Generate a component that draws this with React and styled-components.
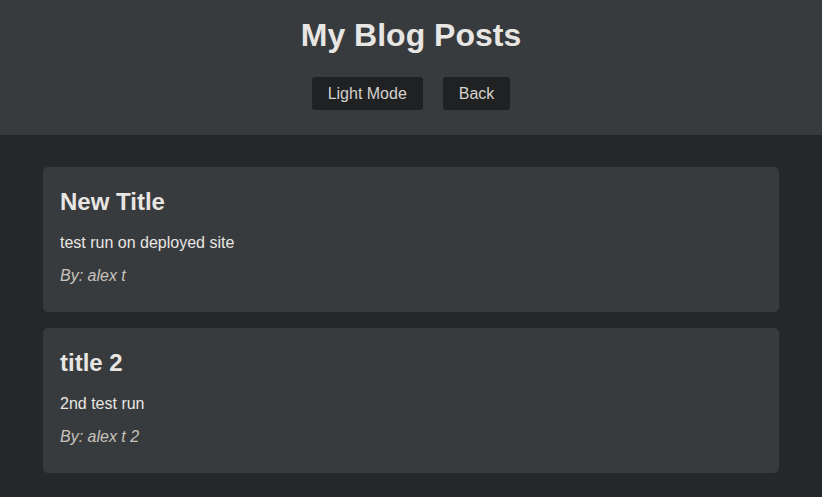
import React from 'react';
import styled, { createGlobalStyle } from 'styled-components';

const GlobalStyle = createGlobalStyle`
    html, body {
        margin: 0;
        padding: 0;
        background-color: #25282a;
        font-family: "Liberation Sans", Arial, sans-serif;
        color: #e8e6e3;
    }
`;

const Header = styled.header`
    background-color: #383b3e;
    padding: 17px 0 25px;
    display: flex;
    flex-direction: column;
    align-items: center;
`;

const Title = styled.h1`
    margin: 0;
    font-size: 32px;
    line-height: 37px;
    font-weight: bold;
    color: #e8e6e3;
`;

const ButtonRow = styled.div`
    display: flex;
    gap: 20px;
    margin-top: 23px;
`;

const Button = styled.button`
    background-color: #1f2123;
    color: #d6d2cc;
    border: none;
    border-radius: 3px;
    padding: 8px 16px;
    font-family: inherit;
    font-size: 16px;
    line-height: 17px;
    cursor: pointer;
`;

const Main = styled.main`
    padding: 32px 43px;
    display: flex;
    flex-direction: column;
    gap: 16px;
`;

const Card = styled.article`
    background-color: #383b3e;
    border-radius: 5px;
    padding: 21px 17px 27px;
`;

const PostTitle = styled.h2`
    margin: 0 0 18px;
    font-size: 24px;
    line-height: 28px;
    font-weight: bold;
    color: #e8e6e3;
`;

const Body = styled.p`
    margin: 0 0 15px;
    font-size: 16px;
    line-height: 18px;
    color: #e8e6e3;
`;

const Author = styled.p`
    margin: 0;
    font-size: 16px;
    line-height: 18px;
    font-style: italic;
    color: #c8c3bc;
`;

const posts = [
    { title: 'New Title', body: 'test run on deployed site', author: 'alex t' },
    { title: 'title 2', body: '2nd test run', author: 'alex t 2' },
];

export default function App() {
    return (
        <>
            <GlobalStyle />
            <Header>
                <Title>My Blog Posts</Title>
                <ButtonRow>
                    <Button>Light Mode</Button>
                    <Button>Back</Button>
                </ButtonRow>
            </Header>
            <Main>
                {posts.map((post) => (
                    <Card key={post.title}>
                        <PostTitle>{post.title}</PostTitle>
                        <Body>{post.body}</Body>
                        <Author>By: {post.author}</Author>
                    </Card>
                ))}
            </Main>
        </>
    );
}
